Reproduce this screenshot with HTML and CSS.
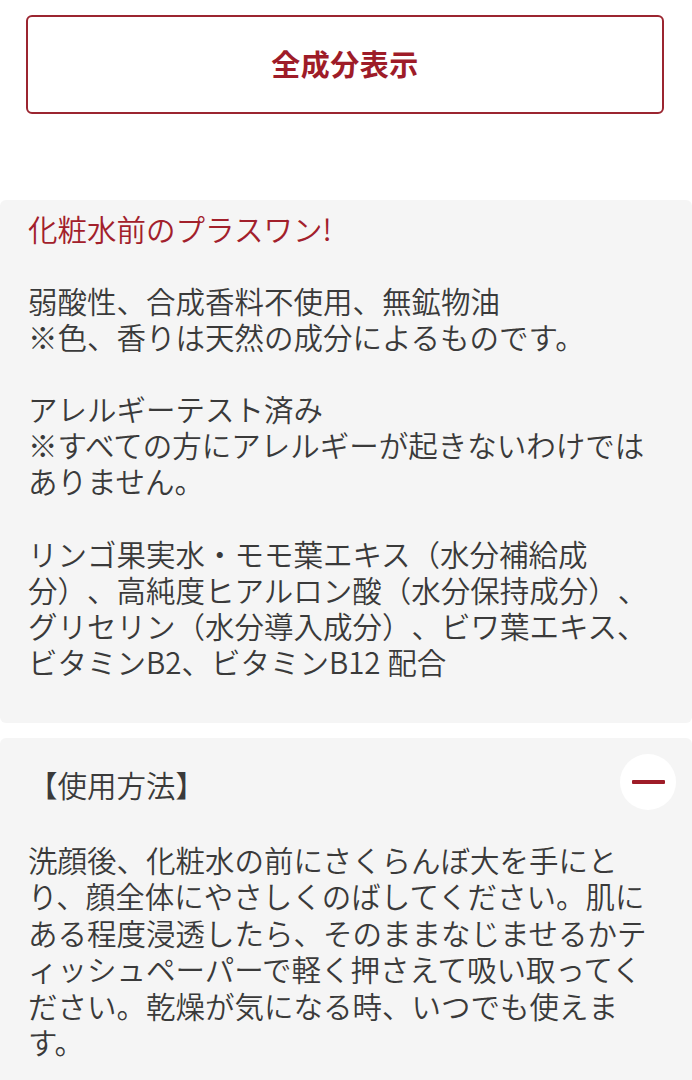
FILE: index.html
```html
<!DOCTYPE html>
<html lang="ja">
<head>
<meta charset="utf-8">
<title>商品詳細</title>
<link rel="stylesheet" href="styles.css">
</head>
<body>
<div class="page">
  <button class="btn-ingredients" type="button">全成分表示</button>

  <section class="panel panel-info">
    <p class="lead">化粧水前のプラスワン!</p>
    <p class="text">弱酸性、合成香料不使用、無鉱物油<br>※色、香りは天然の成分によるものです。</p>
    <p class="text">アレルギーテスト済み<br>※すべての方にアレルギーが起きないわけではありません。</p>
    <p class="text">リンゴ果実水・モモ葉エキス（水分補給成分）、高純度ヒアルロン酸（水分保持成分）、グリセリン（水分導入成分）、ビワ葉エキス、ビタミンB2、ビタミンB12 配合</p>
  </section>

  <section class="panel panel-usage">
    <div class="acc-head">
      <h2 class="acc-title">【使用方法】</h2>
      <span class="acc-toggle" aria-label="閉じる"><span class="minus"></span></span>
    </div>
    <p class="text usage-text">洗顔後、化粧水の前にさくらんぼ大を手にとり、顔全体にやさしくのばしてください。肌にある程度浸透したら、そのままなじませるかティッシュペーパーで軽く押さえて吸い取ってください。乾燥が気になる時、いつでも使えます。</p>
  </section>
</div>
</body>
</html>
```

FILE: styles.css
```css
* { box-sizing: border-box; }

html, body {
  margin: 0;
  padding: 0;
  background: #ffffff;
}

body {
  font-family: "Noto Sans CJK JP", "Noto Sans", sans-serif;
  color: #3a3a3a;
  text-spacing-trim: space-all;
}

.page {
  display: flex;
  flex-direction: column;
  padding-top: 15px;
}

.btn-ingredients {
  margin: 0 28px 0 26px;
  height: 99px;
  border: 2px solid #9b2530;
  border-radius: 6px;
  background: #ffffff;
  color: #9e1c28;
  font-family: "Noto Sans CJK JP", sans-serif;
  font-size: 29px;
  font-weight: 700;
  letter-spacing: 0.5px;
  padding: 0 0 3px 0;
}

.panel {
  background: #f5f5f5;
  border-radius: 6px;
}

.panel-info {
  margin-top: 86px;
  padding: 10px 28px 44px 28px;
}

.lead,
.text {
  margin: 0;
  font-size: 29.5px;
  line-height: 36.1px;
  font-weight: 350;
}

.lead {
  color: #a2202b;
  margin-bottom: 36px;
}

.text + .text {
  margin-top: 36px;
}

.panel-usage {
  margin-top: 15px;
  padding: 16px 16px 60px 28px;
}

.acc-head {
  display: flex;
  align-items: center;
  justify-content: space-between;
}

.acc-title {
  margin: 0;
  padding-top: 5px;
  font-size: 29.5px;
  line-height: 36px;
  font-weight: 350;
  color: #3a3a3a;
}

.acc-toggle {
  width: 56px;
  height: 56px;
  border-radius: 50%;
  background: #ffffff;
  display: flex;
  align-items: center;
  justify-content: center;
}

.minus {
  display: block;
  width: 33px;
  height: 3.5px;
  border-radius: 1px;
  background: #9e1c28;
}

.usage-text {
  margin-top: 31px;
  margin-right: 12px;
  line-height: 36.5px;
}
```
